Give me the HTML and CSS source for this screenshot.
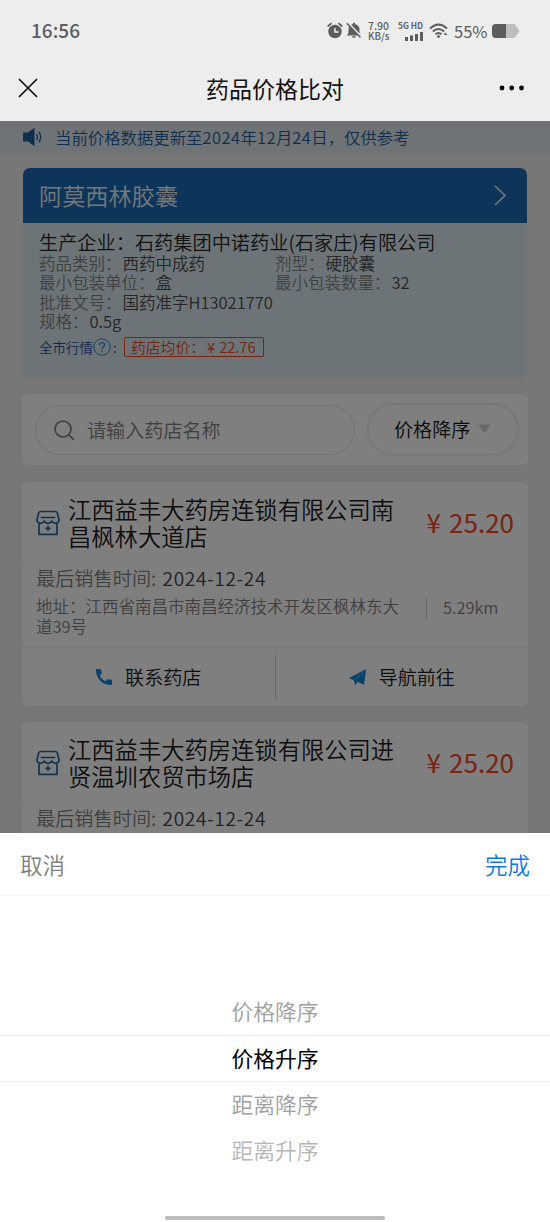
FILE: index.html
```html
<!DOCTYPE html>
<html lang="zh-CN">
<head>
<meta charset="utf-8">
<title>药品价格比对</title>
<link rel="stylesheet" href="styles.css">
</head>
<body>
<svg class="defs" width="0" height="0" aria-hidden="true">
  <symbol id="store" viewBox="0 0 24 26">
    <path d="M4.500 1.500h15q1.300 0 1.800 1.300L23 9.500q0 3.500-3.400 3.800-2.400 0-3.800-2.100-1.500 2.100-3.800 2.100t-3.800-2.100Q6.800 13.300 4.400 13.300 1 13 1 9.500L2.700 2.800Q3.200 1.500 4.500 1.500z M3 13v11.300h18V13 M4.800 7.500h14.400 M12 15.700v5.400 M9.300 18.400h5.400" fill="none" stroke="currentColor" stroke-width="1.700"/>
  </symbol>
  <symbol id="phone" viewBox="0 0 18 18">
    <path d="M1 1h4.500q.6 0 .7.700.1 1.700.6 3.200.2.600-.3 1.100L4.700 7.700q2 3.700 5.600 5.600l1.900-1.900q.5-.4 1.100-.2 1.500.5 3 .5.700.1.700.8v3.600q0 .9-.9.900Q9.500 17 5.200 12.700 1 8.500 1 1z" fill="currentColor"/>
  </symbol>
  <symbol id="plane" viewBox="0 0 18 18">
    <path d="M17 1 0 10l4.800 2.200zM17.200 1 6 12.600V17l2.800-3 6.200 2.800z" fill="currentColor"/>
    <path d="M17 1 4.800 12.200 6 17V12.600z" fill="currentColor"/>
  </symbol>
</svg>
<div class="phone">
  <header class="top">
    <div class="status">
      <span class="clock">16:56</span>
      <div class="status-icons">
        <svg class="alarm" width="16" height="17" viewBox="0 0 16 17"><circle cx="8" cy="9.500" r="6.800" fill="#5d5d5d"/><path d="M1.200 4 4 1.600M14.800 4 12 1.600" stroke="#5d5d5d" stroke-width="1.800" stroke-linecap="round"/><path d="M8 6v4h3.500" fill="none" stroke="#ededed" stroke-width="1.500"/></svg>
        <svg class="bell" width="16" height="17" viewBox="0 0 16 17"><path d="M8 .800q1.200 0 1.300 1.400Q13.500 3.400 13.500 7.500v3l1.500 3H1l1.500-3v-3Q2.500 3.400 6.700 2.200 6.800.800 8 .800zM6 14.300h4q-.5 1.700-2 1.700t-2-1.700z" fill="#5d5d5d"/><path d="M2 1 15.500 14.800" stroke="#ededed" stroke-width="2"/><path d="M.800 1.300 14.500 15.500" stroke="#5d5d5d" stroke-width="1.500"/></svg>
        <div class="speed"><span>7.90</span><span>KB/s</span></div>
        <div class="signal">
          <span>5G HD</span>
          <svg width="18" height="9" viewBox="0 0 18 9"><path d="M0 5h3v4H0zM5 3.500h3V9H5zM10 2h3v7h-3zM15 0h3v9h-3z" fill="#5d5d5d"/></svg>
        </div>
        <svg class="wifi" width="19" height="16" viewBox="0 0 19 16"><path d="M1 5.500q8.500-8 17 0M3.800 8.500q5.700-5 11.400 0M6.500 11.300q3-2.500 6 0" fill="none" stroke="#5d5d5d" stroke-width="2"/><path d="m9.500 15.500 2-2.500q-2-1.500-4 0zM16.500 9.500l1.800 2.500h-3.500z" fill="#5d5d5d"/></svg>
        <span class="percent">55%</span>
        <svg class="battery" width="27" height="14" viewBox="0 0 27 14"><path d="M4 0h17q3.500 0 3.500 3.500 2.500.5 2.500 3.500t-2.500 3.500Q24.500 14 21 14H4q-4 0-4-4V4q0-4 4-4z" fill="#bdbdbd"/><path d="M14 0H4Q0 0 0 4v6q0 4 4 4h10z" fill="#5d5d5d"/></svg>
      </div>
    </div>
    <nav class="nav">
      <svg width="20" height="20" viewBox="0 0 20 20"><path d="m1 1 18 18M19 1 1 19" stroke="#111" stroke-width="1.700"/></svg>
      <h1>药品价格比对</h1>
      <svg width="26" height="6" viewBox="0 0 26 6"><circle cx="3" cy="3" r="2.400"/><circle cx="12.700" cy="3" r="2.400"/><circle cx="22.500" cy="3" r="2.400"/></svg>
    </nav>
  </header>

  <main class="page">
    <div class="notice">
      <svg width="20" height="20" viewBox="0 0 20 20"><path d="M1 5.500h4L11.500.800v18.400L5 14.500H1q-1 0-1-1v-7q0-1 1-1z" fill="currentColor"/><path d="M13.500 7q2 3 0 6M15.800 4.800q3.800 5.200 0 10.400" fill="none" stroke="currentColor" stroke-width="1.300"/></svg>
      <span>当前价格数据更新至<span class="n">2024</span>年<span class="n">12</span>月<span class="n">24</span>日，仅供参考</span>
    </div>

    <section class="drug">
      <div class="drug-head">
        <h2>阿莫西林胶囊</h2>
        <svg width="12" height="21" viewBox="0 0 12 21"><path d="m1 1 10 9.500L1 20" fill="none" stroke="currentColor" stroke-width="1.600"/></svg>
      </div>
      <div class="drug-body">
        <p class="maker">生产企业：石药集团中诺药业(石家庄)有限公司</p>
        <div class="facts">
          <p>药品类别：<b>西药中成药</b></p><p>剂型：<b>硬胶囊</b></p>
          <p>最小包装单位：<b>盒</b></p><p>最小包装数量：<b>32</b></p>
          <p>批准文号：<b>国药准字H13021770</b></p><p></p>
          <p>规格：<b class="n">0.5g</b></p><p></p>
        </div>
        <div class="market">
          <span>全市行情</span>
          <svg width="18" height="18" viewBox="0 0 18 18"><g fill="none" stroke="currentColor"><circle cx="9" cy="9" r="8.200"/><path d="M6.400 7.200q.1-2.700 2.700-2.700 2.500.1 2.500 2.300 0 1.200-1.300 2Q9 9.600 9 11.200M9 12.500v1.500" stroke-width="1.200"/></g></svg>
          <span class="colon">:</span>
          <span class="avg">药店均价：<i>¥</i>22.76</span>
        </div>
      </div>
    </section>

    <section class="filter">
      <div class="search">
        <svg width="21" height="21" viewBox="0 0 21 21"><g fill="none" stroke="currentColor" stroke-width="1.700"><circle cx="9" cy="9" r="8"/><path d="m14.800 14.800 5 5"/></g></svg>
        <span>请输入药店名称</span>
      </div>
      <div class="sort"><span>价格降序</span><svg width="13" height="10" viewBox="0 0 13 10"><path d="M.500.500h12l-6 9z" fill="currentColor"/></svg></div>
    </section>

    <article class="store">
      <div class="store-head">
        <svg width="24" height="26"><use href="#store"/></svg>
        <h3>江西益丰大药房连锁有限公司南昌枫林大道店</h3>
        <span class="price"><i>¥</i>25.20</span>
      </div>
      <div class="store-info">
        <p class="sold">最后销售时间: <b>2024-12-24</b></p>
        <div class="where">
          <p>地址：江西省南昌市南昌经济技术开发区枫林东大道39号</p>
          <span class="km">5.29km</span>
        </div>
      </div>
      <div class="actions">
        <div class="action"><svg width="18" height="18"><use href="#phone"/></svg><span>联系药店</span></div>
        <div class="action"><svg width="18" height="18"><use href="#plane"/></svg><span>导航前往</span></div>
      </div>
    </article>

    <article class="store">
      <div class="store-head">
        <svg width="24" height="26"><use href="#store"/></svg>
        <h3>江西益丰大药房连锁有限公司进贤温圳农贸市场店</h3>
        <span class="price"><i>¥</i>25.20</span>
      </div>
      <div class="store-info">
        <p class="sold">最后销售时间: <b>2024-12-24</b></p>
      </div>
    </article>
    <div class="mask"></div>
  </main>

  <section class="sheet">
    <div class="sheet-head"><span class="cancel">取消</span><span class="done">完成</span></div>
    <ul class="picker">
      <li class="near">价格降序</li>
      <li class="current">价格升序</li>
      <li class="near">距离降序</li>
      <li class="far">距离升序</li>
    </ul>
    <div class="home"></div>
  </section>
</div>
</body>
</html>
```
FILE: styles.css
```css
* { box-sizing: border-box; margin: 0; padding: 0; }
body {
  width: 550px; height: 1222px; overflow: hidden;
  font-family: "Noto Sans CJK SC", "Noto Sans", sans-serif;
  font-weight: 350; background: #fff; color: #222;
}
h1, h2, h3, b, i { font-weight: inherit; font-style: normal; }
svg { display: block; flex: none; }
.defs { position: absolute; }
.phone { display: flex; flex-direction: column; height: 1222px; }

.top { height: 121px; background: #ededed; flex: none; }
.status { height: 61px; padding: 0 31px 0 31px; display: flex; align-items: center; justify-content: space-between; color: #5d5d5d; }
.clock { font-size: 19px; font-weight: 500; line-height: 28px; padding-bottom: 1px; }
.status-icons { display: flex; align-items: center; }
.alarm { margin-right: 3px; }
.speed { display: flex; flex-direction: column; margin-left: 6px; width: 24px; font-size: 10.500px; line-height: 10px; font-weight: 500; }
.speed span + span { font-size: 9.700px; }
.signal { display: flex; flex-direction: column; align-items: flex-end; margin-left: 6px; width: 25px; font-size: 8.300px; line-height: 11px; font-weight: 700; white-space: nowrap; }
.signal svg { margin-top: 1px; }
.wifi { margin-left: 6px; }
.percent { width: 38px; margin-left: 6px; font-size: 16.500px; font-weight: 400; }
.battery { margin-top: 1px; }
.nav { height: 54px; padding: 0 25px 0 18px; display: flex; align-items: center; justify-content: space-between; color: #111; }
.nav h1 { font-size: 23px; font-weight: 400; margin-left: 13px; line-height: 34px; padding-bottom: 1px; }

.page { position: relative; height: 712px; overflow: hidden; background: #eee; flex: none; }
.mask { position: absolute; inset: 0; background: rgba(0, 0, 0, .5); }
.notice { height: 33px; padding-left: 23px; display: flex; align-items: center; gap: 12px; background: #dfe6ec; color: #1a5c9c; font-size: 16.400px; line-height: 24px; padding-bottom: 1px; white-space: nowrap; }
.notice .n { letter-spacing: .5px; }

.drug { margin: 14px 23px 0; height: 210px; border-radius: 7px; overflow: hidden; background: #d8e8f0; }
.drug-head { height: 54.500px; padding: 0 21px 0 16px; display: flex; align-items: center; justify-content: space-between; background: #1a6ab4; color: #e8eef6; }
.drug-head h2 { font-size: 23.200px; line-height: 34px; }
.drug-body { padding: 8.500px 16px 0; }
.maker { font-size: 19.200px; line-height: 22px; white-space: nowrap; }
.facts { display: grid; grid-template-columns: 236px 1fr; grid-auto-rows: 19.600px; margin-top: .7px; font-size: 16.500px; line-height: 19.600px; color: #808080; }
.facts p { white-space: nowrap; }
.facts b { color: #4a4a4a; margin-left: 1px; }
.market { display: flex; align-items: center; margin-top: 4.500px; font-size: 13.500px; line-height: 20px; color: #2a4a98; white-space: nowrap; }
.market svg { color: #2e86d0; }
.colon { width: 13px; padding-left: 2px; }
.avg { width: 140px; height: 20px; line-height: 18px; padding-left: 6px; border: 1px solid #f04820; border-radius: 2px; color: #f04820; font-size: 14.800px; }
.avg i { margin: 0 4px 0 2px; }

.filter { margin: 16px 22px 0; height: 71px; padding: 11px 11px 0 13px; display: flex; gap: 14px; background: #fff; border-radius: 6px; font-size: 19.100px; line-height: 28px; }
.search { width: 320px; height: 50px; padding-left: 18px; display: flex; align-items: center; gap: 12px; border: 1px solid #e2e2e2; border-radius: 25px; color: #808080; }
.sort { width: 148px; height: 49px; display: flex; align-items: center; padding: 0 0 1px 25px; gap: 8px; border-radius: 25px; background: #fff; box-shadow: 0 0 5px rgba(0, 0, 0, .17); color: #111; }
.sort svg { color: #d0d0d0; }

.store { margin: 17px 22px 0; height: 224px; background: #fff; border-radius: 6px; }
.store + .store { margin-top: 16px; }
.store-head { height: 78.500px; padding: 5px 14px 0 14px; display: flex; align-items: center; border-bottom: 1px solid #f0f0f0; }
.store-head svg { color: #28669e; }
.store-head h3 { width: 329px; margin-left: 8px; font-size: 23.300px; line-height: 27.500px; color: #1a1a1a; }
.price { margin-left: auto; font-size: 26px; line-height: 36px; padding-bottom: 2px; color: #f04820; white-space: nowrap; font-weight: 400; }
.price i { margin-right: 8px; }
.store-info { height: 86.500px; padding: 6.500px 14px 0; color: #808080; }
.sold { font-size: 19.200px; line-height: 22px; white-space: nowrap; }
.sold b { color: #444; letter-spacing: .6px; margin-left: 2px; }
.where { display: flex; margin-top: 8px; font-size: 16.500px; line-height: 19.500px; }
.where p { width: 366px; }
.km { height: 23px; margin-left: 24px; padding-left: 16px; border-left: 1px solid #d8d8d8; font-size: 16.400px; line-height: 21px; }
.actions { height: 59px; display: flex; align-items: center; border-top: 1px solid #eee; font-size: 19.100px; line-height: 28px; color: #1a1a1a; }
.action { flex: 1; height: 46px; display: flex; align-items: center; justify-content: center; gap: 12px; }
.action + .action { border-left: 1px solid #d0d0d0; }
.action svg { color: #1685d8; }

.sheet { flex: 1; background: #fff; display: flex; flex-direction: column; align-items: stretch; }
.sheet-head { height: 62.500px; padding: 0 20px; display: flex; align-items: center; justify-content: space-between; border-bottom: 1px solid #f6f6f6; font-size: 22.500px; line-height: 32px; }
.cancel { color: #808080; }
.done { color: #0a7be0; }
.picker { list-style: none; margin-top: 93px; text-align: center; font-size: 21.800px; }
.picker li { height: 46.500px; line-height: 43.500px; }
.near { color: #a0a0a0; }
.far { color: #b6b6b6; }
.current { color: #000; font-weight: 400; border-top: 1px solid #eee; border-bottom: 1px solid #eee; }
.home { width: 220px; height: 4px; margin: auto auto 2px; border-radius: 2px; background: #bcbcbc; }
```
